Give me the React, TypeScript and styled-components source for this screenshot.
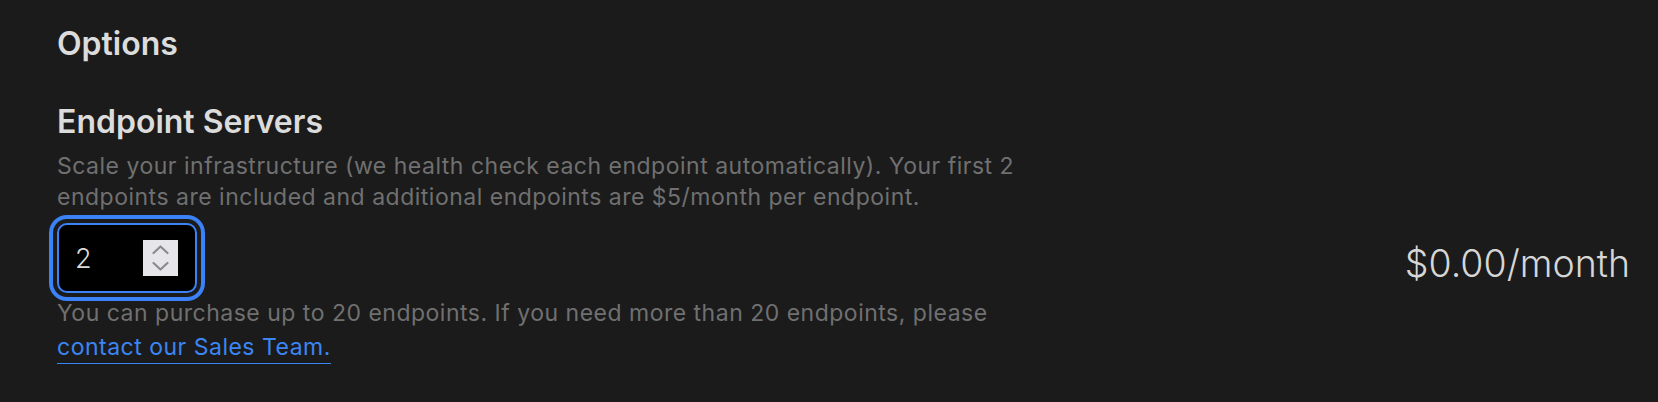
import React from "react";
import styled, { createGlobalStyle } from "styled-components";

const Global = createGlobalStyle`
  html, body { margin: 0; padding: 0; background: #1b1b1b; }
  body { font-family: Inter, "Noto Sans", sans-serif; -webkit-font-smoothing: antialiased; }
`;

const Page = styled.div`
  width: 1658px;
  height: 402px;
  box-sizing: border-box;
  padding: 24px 28px 0 57px;
  background: #1b1b1b;
  color: #dcdcdc;
`;

const SectionTitle = styled.h2`
  margin: 0;
  font-size: 32px;
  line-height: 40px;
  font-weight: 600;
  color: #dcdcdc;
`;

const OptionTitle = styled.h3`
  margin: 38px 0 0;
  font-size: 32px;
  line-height: 40px;
  font-weight: 600;
  color: #dcdcdc;
`;

const Description = styled.p`
  margin: 9px 0 0;
  max-width: 1000px;
  font-size: 23px;
  line-height: 31px;
  letter-spacing: 0.5px;
  color: #707070;
`;

const ControlRow = styled.div`
  display: flex;
  align-items: center;
  justify-content: space-between;
  margin-top: 10px;
`;

const Field = styled.div`
  box-sizing: border-box;
  width: 140px;
  height: 70px;
  display: flex;
  align-items: center;
  justify-content: space-between;
  padding: 0 17px 0 16px;
  background: #000;
  border: 2px solid #3b82f6;
  border-radius: 10px;
  box-shadow: 0 0 0 4px #1b1b1b, 0 0 0 8px #3b82f6;
`;

const Value = styled.span`
  font-size: 27px;
  font-weight: 300;
  color: #dcdcdc;
`;

const Spinner = styled.div`
  width: 35px;
  height: 36px;
  background: #e5e5ea;
  display: flex;
`;

const Price = styled.div`
  margin-top: 11px;
  font-size: 37.5px;
  font-weight: 300;
  color: #d6d6d6;
`;

const Note = styled.p`
  margin: 3px 0 0;
  max-width: 1000px;
  font-size: 23px;
  line-height: 34px;
  letter-spacing: 0.5px;
  color: #707070;
`;

const SalesLink = styled.a`
  color: #3b86f3;
  text-decoration: none;
  border-bottom: 1.5px solid #3b86f3;
  padding-bottom: 2px;
`;

export default function App() {
  return (
    <>
      <Global />
      <Page>
        <SectionTitle>Options</SectionTitle>
        <OptionTitle>Endpoint Servers</OptionTitle>
        <Description>
          Scale your infrastructure (we health check each endpoint automatically). Your first 2
          endpoints are included and additional endpoints are $5/month per endpoint.
        </Description>
        <ControlRow>
          <Field>
            <Value>2</Value>
            <Spinner>
              <svg width="35" height="36" viewBox="0 0 35 36" fill="none" stroke="#8a8a8e" strokeWidth="2.2" strokeLinecap="round" strokeLinejoin="round">
                <path d="M10.5 13 L17.5 6.5 L24.5 13" />
                <path d="M10.5 23 L17.5 29.5 L24.5 23" />
              </svg>
            </Spinner>
          </Field>
          <Price>$0.00/month</Price>
        </ControlRow>
        <Note>
          You can purchase up to 20 endpoints. If you need more than 20 endpoints, please{" "}
          <SalesLink href="#">contact our Sales Team.</SalesLink>
        </Note>
      </Page>
    </>
  );
}
